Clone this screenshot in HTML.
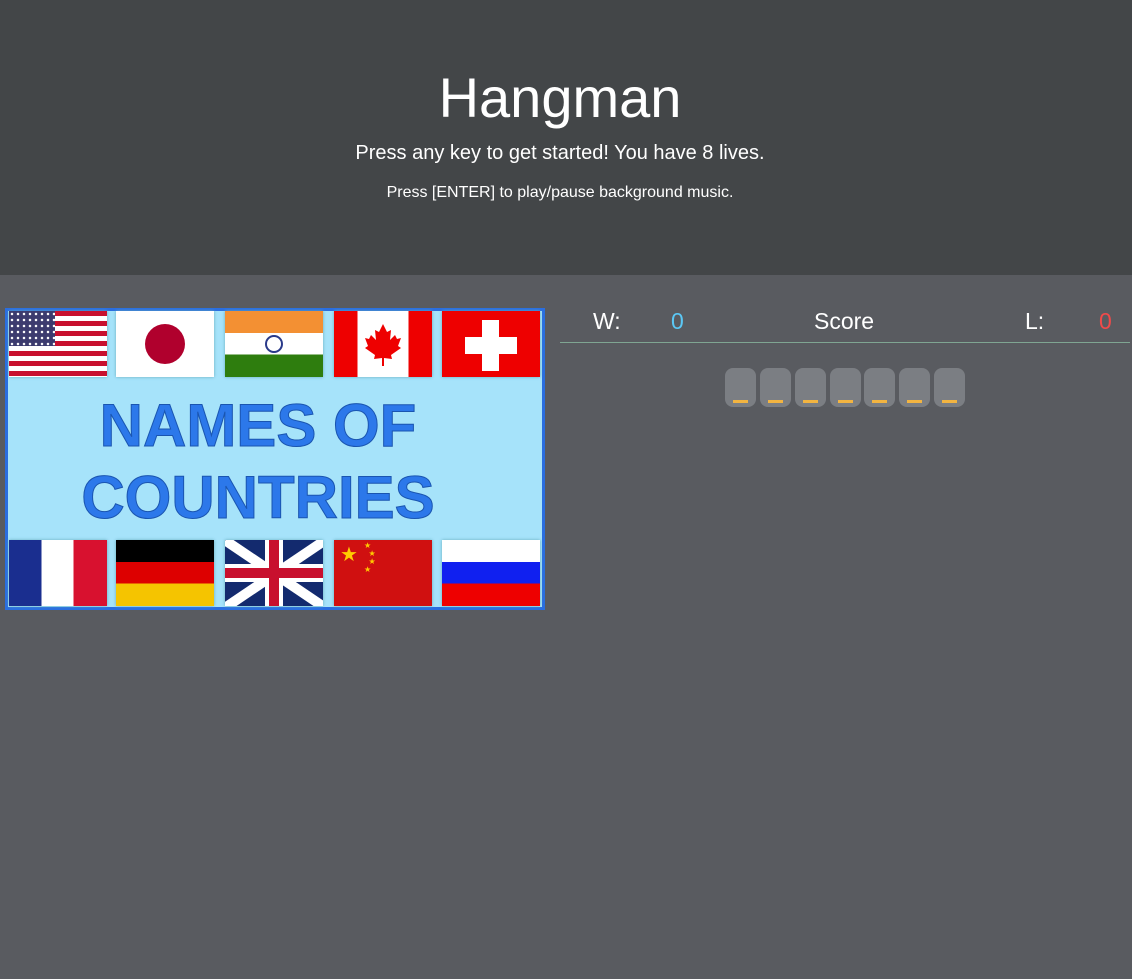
<!DOCTYPE html>
<html><head><style>
body{margin:0;width:1132px;height:979px;background:#595b60;font-family:"Liberation Sans",Arial,sans-serif;color:#fff;position:relative;overflow:hidden}
.hdr{position:absolute;left:0;top:0;width:1132px;height:275px;background:#434648;text-align:center}
.c{position:absolute;left:0;width:1120px;text-align:center}
.t{top:66px;font-size:56px;line-height:64px}
.s1{top:142px;font-size:20px}
.s2{top:184px;font-size:16px}
.img{position:absolute;left:5px;top:308px;width:534px;height:296px;border:3px solid #2a6ee0;background:#a6e3fa}
.f{position:absolute;width:98px;height:66px;overflow:hidden;box-shadow:0 0 3px #6ab}
.big{position:absolute;left:-17px;width:100%;text-align:center;font-weight:bold;color:#2c78ea;font-size:60px;-webkit-text-stroke:1px #1a55b0}
.sc{position:absolute;top:308px;font-size:23px}
.box{position:absolute;top:368px;width:31px;height:39px;border-radius:8px;background:#7b7e83}
.box i{position:absolute;left:8px;width:15px;height:3px;top:32px;background:#f2b441}
</style></head><body>
<div class="hdr"><div class="c t">Hangman</div><div class="c s1">Press any key to get started! You have 8 lives.</div><div class="c s2">Press [ENTER] to play/pause background music.</div></div>
<div class="img">
<div class="f" style="left:1px;top:0;background:repeating-linear-gradient(#c8102e 0 5px,#fff 5px 10px)"><div style="position:absolute;left:0;top:0;width:46px;height:35px;background:#3c3b6e;background-image:radial-gradient(#fff 1px,transparent 1.5px);background-size:6px 6px"></div></div>
<div class="f" style="left:108px;top:0;background:#fff"><div style="position:absolute;left:29px;top:13px;width:40px;height:40px;border-radius:50%;background:#b0002d"></div></div>
<div class="f" style="left:217px;top:0;background:linear-gradient(#f39033 0 33%,#fff 33% 66%,#2e7d0e 66%)"><div style="position:absolute;left:40px;top:24px;width:14px;height:14px;border:2px solid #2a3a8a;border-radius:50%"></div></div>
<div class="f" style="left:326px;top:0;background:linear-gradient(90deg,#e00 0 24%,#fff 24% 76%,#e00 76%)"><svg style="position:absolute;left:29px;top:11px" width="40" height="44" viewBox="0 0 40 44"><path d="M20 2 L24 10 L28 8 L27 18 L32 13 L34 17 L38 16 L35 24 L38 26 L28 33 L29 37 L21 36 L21 44 L19 44 L19 36 L11 37 L12 33 L2 26 L5 24 L2 16 L6 17 L8 13 L13 18 L12 8 L16 10 Z" fill="#e00"/></svg></div>
<div class="f" style="left:434px;top:0;background:#e00"><div style="position:absolute;left:23px;top:26px;width:52px;height:17px;background:#fff"></div><div style="position:absolute;left:40px;top:9px;width:17px;height:51px;background:#fff"></div></div>
<div class="big" style="top:80px">NAMES OF</div>
<div class="big" style="top:152px">COUNTRIES</div>
<div class="f" style="left:1px;top:229px;background:linear-gradient(90deg,#1a2e8f 0 33%,#fff 33% 66%,#d8112f 66%)"></div>
<div class="f" style="left:108px;top:229px;background:linear-gradient(#000 0 33%,#d00 33% 66%,#f5c400 66%)"></div>
<div class="f" style="left:217px;top:229px;background:#132a6e"><div style="position:absolute;left:-10px;top:29px;width:120px;height:10px;background:#fff;transform:rotate(34deg)"></div><div style="position:absolute;left:-10px;top:29px;width:120px;height:10px;background:#fff;transform:rotate(-34deg)"></div><div style="position:absolute;left:0;top:24px;width:98px;height:18px;background:#fff"></div><div style="position:absolute;left:40px;top:0;width:18px;height:66px;background:#fff"></div><div style="position:absolute;left:0;top:28px;width:98px;height:10px;background:#c8102e"></div><div style="position:absolute;left:44px;top:0;width:10px;height:66px;background:#c8102e"></div></div>
<div class="f" style="left:326px;top:229px;background:#d01010"><div style="position:absolute;left:6px;top:2px;font-size:20px;color:#fc0">★</div><div style="position:absolute;left:30px;top:2px;font-size:8px;color:#fc0;line-height:8px">★<br>&nbsp;&nbsp;★<br>&nbsp;&nbsp;★<br>★</div></div>
<div class="f" style="left:434px;top:229px;background:linear-gradient(#fff 0 33%,#1020f0 33% 66%,#e00 66%)"></div>
</div>
<div class="sc" style="left:593px">W:</div>
<div class="sc" style="left:671px;color:#5bc8f5">0</div>
<div class="sc" style="left:814px">Score</div>
<div class="sc" style="left:1025px">L:</div>
<div class="sc" style="left:1099px;color:#f04a4a">0</div>
<div style="position:absolute;left:560px;top:342px;width:570px;height:1px;background:#7fa592"></div>
<div class="box" style="left:725px"><i></i></div>
<div class="box" style="left:760px"><i></i></div>
<div class="box" style="left:795px"><i></i></div>
<div class="box" style="left:830px"><i></i></div>
<div class="box" style="left:864px"><i></i></div>
<div class="box" style="left:899px"><i></i></div>
<div class="box" style="left:934px"><i></i></div>
</body></html>
